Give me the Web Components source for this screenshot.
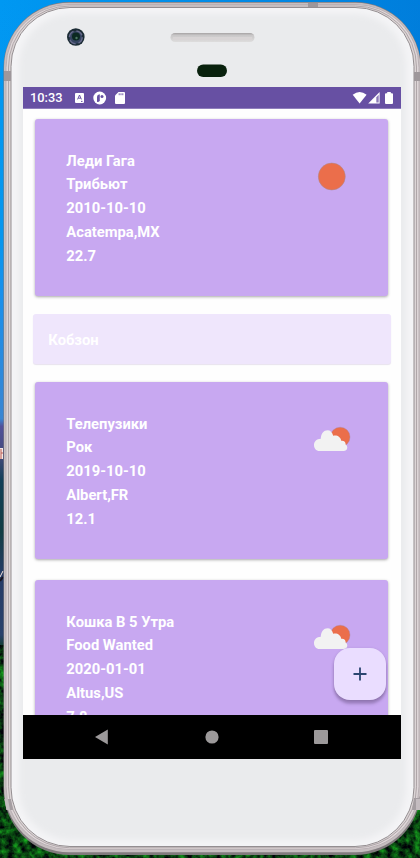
<!DOCTYPE html>
<html lang="ru">
<head>
<meta charset="utf-8">
<title>Events</title>
<style>
html,body{margin:0;width:420px;height:858px;overflow:hidden}
body{font-family:Roboto,"Open Sans",sans-serif}
</style>
</head>
<body>
<phone-frame>
  <status-bar></status-bar>
  <event-list>
    <event-card weather="sun"><span>Леди Гага</span><span>Трибьют</span><span>2010-10-10</span><span>Acatempa,MX</span><span>22.7</span></event-card>
    <name-chip>Кобзон</name-chip>
    <event-card weather="cloud"><span>Телепузики</span><span>Рок</span><span>2019-10-10</span><span>Albert,FR</span><span>12.1</span></event-card>
    <event-card weather="cloud" class="last"><span>Кошка В 5 Утра</span><span>Food Wanted</span><span>2020-01-01</span><span>Altus,US</span><span>7.8</span></event-card>
    <add-button slot="fab"></add-button>
  </event-list>
  <nav-bar></nav-bar>
</phone-frame>
<script>
function define(name, html, setup) {
  customElements.define(name, class extends HTMLElement {
    constructor() {
      super();
      this.attachShadow({mode: 'open'}).innerHTML = html;
    }
    connectedCallback() { if (setup) setup(this); }
  });
}

define('weather-icon', `
<style>:host{display:block;width:40px;height:32px}svg{display:block;overflow:visible}
.cloud{display:none}:host([kind=cloud]) .cloud{display:block}:host([kind=cloud]) .sun{display:none}</style>
<svg class="sun" width="40" height="32"><circle cx="18.8" cy="16.5" r="13.5" fill="#eb6e4b" stroke="#a68a90" stroke-width=".5"/></svg>
<svg class="cloud" width="40" height="32"><circle cx="27.2" cy="14" r="9.8" fill="#eb6e4b" stroke="#a88498" stroke-width=".4"/>
<path transform="translate(0 .5)" d="M6.6 27.5C3 27.5 1 24.8 1 21.5C1 18 4 15.1 7.8 15.2C7.8 10 11 6.7 14.5 6.7C17.2 6.7 19.4 8.6 20.2 12.3C24 11.3 27.7 13.4 28.2 17.3C31 16.9 32.8 18.5 32.6 21C35.4 22.8 34.6 27.5 30.7 27.5Z" fill="#f2f2f2"/></svg>`);

define('event-card', `
<style>
:host{display:flex;justify-content:space-between;box-sizing:border-box;width:353px;height:177px;flex:none;margin-left:2px;padding:30.9px 35px 0 31.3px;border-radius:3px;background:#c8a8f1;color:#fff;box-shadow:0 1px 3px rgba(0,0,0,.34);font-weight:700;font-size:14.75px;line-height:23.7px}
.lines{display:flex;flex-direction:column}
weather-icon{margin-top:10px}
</style><div class="lines"><slot></slot></div><weather-icon></weather-icon>`,
  el => el.shadowRoot.querySelector('weather-icon').setAttribute('kind', el.getAttribute('weather')));

define('name-chip', `
<style>:host{display:flex;align-items:center;box-sizing:border-box;flex:none;width:358px;height:49.5px;margin:18.5px 0 18px;padding:2px 15.3px 0;border-radius:3px;background:#efe6fc;color:#fff;font-weight:700;font-size:14.75px;box-shadow:0 1px 1px rgba(110,80,150,.16)}</style><slot></slot>`);

define('event-list', `
<style>:host{display:flex;flex-direction:column;position:relative;box-sizing:border-box;height:606px;overflow:hidden;background:#fefefe;padding:9.8px 10px 0}
::slotted(.last){margin-top:21px}
.fab{position:absolute;right:15px;bottom:15px}</style>
<slot></slot><div class="fab"><slot name="fab"></slot></div>`);

define('add-button', `
<style>:host{display:flex;align-items:center;justify-content:center;width:52px;height:52px;border-radius:16px;background:#eaddff;box-shadow:0 4px 3px rgba(70,50,90,.3),0 1px 3px rgba(70,50,90,.25)}
svg{display:block}</style>
<svg width="14" height="14"><path d="M.5 7H13.5M7 .5V13.5" stroke="#2b4570" stroke-width="1.8"/></svg>`);

define('status-bar', `
<style>:host{display:flex;justify-content:space-between;box-sizing:border-box;height:22px;background:#6750a3;border-bottom:1px solid #8f7ebc;color:#fff;padding:0 7px;font-size:12.8px;font-weight:500}
div{display:flex;align-items:center}.time{width:45px;line-height:22px;padding-top:1px}svg{display:block}</style>
<div><span class="time">10:33</span>
<svg width="52" height="16" fill="#fff"><rect y="3" width="9" height="10" rx="1"/><path d="M2.6 9.4L4.5 5L6.4 9.4M3.4 8.2H5.6M6 11.4H7.5" fill="none" stroke="#6750a3" stroke-width="1"/><circle cx="24.7" cy="8" r="6.4"/><path d="M22 12V6.6Q22.1 4.6 24.8 4.2V10.4Q24.6 12 22 12Z" fill="#6750a3"/><circle cx="27" cy="6.4" r="1.5" fill="#6750a3"/><path d="M43.5 2H49Q50 2 50 3V13Q50 14 49 14H41Q40 14 40 13V5.5Z"/><path d="M44.2 3.3V5.2M46 3.3V5.2M47.8 3.3V5.2" stroke="#6750a3" stroke-width=".9"/></svg></div>
<div><svg width="42" height="16" fill="#fff"><path d="M.7 4.8Q7.6 -1 14.6 4.8L7.6 13.6Z"/><path d="M27.6 2V13.5H16.2Z"/><path d="M24.3 7.2L26.7 4.8V12.4H24.3Z" fill="#8b79b8"/><path d="M35.2 3.2V2H38.8V3.2H40Q41 3.2 41 4.2V13Q41 14 40 14H34Q33 14 33 13V4.2Q33 3.2 34 3.2Z"/></svg></div>`);

define('nav-bar', `
<style>:host{display:grid;grid-template-columns:1fr 1fr 1fr;align-items:center;justify-items:center;box-sizing:border-box;height:44px;padding:0 25px;background:#000}svg{display:block}</style>
<svg width="16" height="16" fill="#9c999a"><path d="M0 8L12.8 .5V15.5Z"/></svg>
<svg width="16" height="16" fill="#9c999a"><circle cx="8" cy="8" r="6.6"/></svg>
<svg width="16" height="16" fill="#9c999a"><rect x="1" y="1" width="14" height="14" rx="1"/></svg>`);

define('phone-frame', `
<style>
:host{display:block;position:relative;box-sizing:border-box;width:420px;height:858px;overflow:hidden;padding:87px 19px 0 23px}
.shell{position:absolute;inset:0;display:block}
.screen{position:relative;width:378px;height:672px;overflow:hidden}
</style>
<svg class="shell" width="420" height="858">
<defs>
<linearGradient id="sky" x2="0" y2="1"><stop offset="0" stop-color="#0098f2"/><stop offset=".28" stop-color="#0796ee"/><stop offset=".34" stop-color="#1990ec"/><stop offset=".488" stop-color="#3a85d2"/><stop offset=".497" stop-color="#51509a"/><stop offset=".53" stop-color="#454a7c"/><stop offset=".56" stop-color="#123f58"/><stop offset=".62" stop-color="#123d43"/><stop offset=".67" stop-color="#263c67"/><stop offset=".74" stop-color="#29416b"/><stop offset=".76" stop-color="#063a12"/><stop offset="1" stop-color="#07400c"/></linearGradient>
<linearGradient id="right"><stop offset="0" stop-color="#0070d0" stop-opacity="0"/><stop offset="1" stop-color="#0070d0" stop-opacity=".65"/></linearGradient>
<linearGradient id="speaker" x2="0" y2="1"><stop offset="0" stop-color="#a5a2a3"/><stop offset=".25" stop-color="#c8c6c7"/><stop offset="1" stop-color="#dedddd"/></linearGradient>
<filter id="leaves" x="0" y="0" width="100%" height="100%" color-interpolation-filters="sRGB"><feTurbulence type="fractalNoise" baseFrequency=".14" numOctaves="4" seed="8"/><feColorMatrix values="0 .15 0 0 -.04 0 1.1 0 0 -.28 0 .15 0 0 -.01 0 0 0 0 1"/></filter>
<filter id="soft"><feGaussianBlur stdDeviation="3"/></filter>
<clipPath id="face"><rect x="12" y="8" width="401" height="838" rx="58"/></clipPath>
</defs>
<rect width="420" height="858" fill="url(#sky)"/><rect width="420" height="200" fill="url(#right)"/>
<rect y="645" width="420" height="213" filter="url(#leaves)"/>
<path d="M0 448H3V459H0Z" fill="#f6e9e6"/><path d="M1 449V459M1 453H3" stroke="#bb5b50"/><path d="M0 577L3 571" stroke="#f4e2da"/><path d="M0 581L3 577" stroke="#16131d" stroke-width="2"/>
<rect x="3.5" y="2" width="417.5" height="853" rx="66" fill="#817b7e"/>
<rect x="4" y="2.7" width="416.5" height="849.5" rx="65" fill="#c6bec0"/>
<rect x="6" y="4.5" width="413" height="845" rx="63" fill="#ded6d8" stroke="#b9b0b4" stroke-width="1"/>
<rect x="8.5" y="6" width="408" height="841.8" rx="61" fill="#dcd5d6" stroke="#afa6a9" stroke-width="1"/>
<rect x="11" y="7.5" width="403" height="839" rx="59" fill="#f4f4f6" stroke="#948e91" stroke-width="1"/>
<g clip-path="url(#face)"><rect x="19" y="14" width="387" height="826" rx="52" fill="#eaebed" filter="url(#soft)"/></g>
<path d="M4 71H11V81H4ZM414 72H420V81H414ZM308 3H318V7H308Z" fill="#9e979b"/>
<path d="M4.5 799H11L13 810H6.5ZM414 798H420V810H412Z" fill="#a59ea2"/>
<path d="M4.5 799H8L10 810H6.5ZM416 799H420V810H416Z" fill="#c4bcc0"/>
<rect x="170.5" y="33" width="84" height="9" rx="4.5" fill="url(#speaker)"/><rect x="173" y="37" width="79" height="3" fill="#d8d4d5"/>
<circle cx="75.8" cy="37" r="8.8" fill="#1b2b34"/><circle cx="75.8" cy="37.3" r="6.4" fill="#34435f" stroke="#65698a" stroke-width="1.5" stroke-dasharray="7 3"/><circle cx="76" cy="36.5" r="4" fill="#0b2922"/><circle cx="76.5" cy="38" r="1.2" fill="#4c7763"/>
<rect x="197" y="64.5" width="30" height="12.5" rx="6.2" fill="#09210d"/>
</svg>
<div class="screen"><slot></slot></div>`);
</script>
</body>
</html>
